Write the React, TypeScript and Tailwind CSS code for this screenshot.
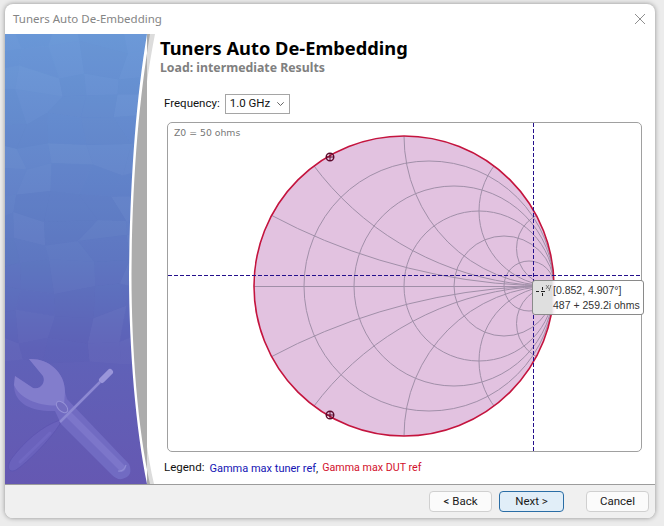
import React from 'react';

const uiFont = "font-['Noto_Sans',sans-serif]";

// low-poly facets for the sidebar art
const rnd = (n: number) => {
  const s = Math.sin(n * 127.1) * 43758.5453;
  return s - Math.floor(s);
};
const vertex = (i: number, j: number) => {
  const x = i * 34 - 15 + (rnd(i * 31 + j * 7 + 1) - 0.5) * 22;
  const y = 24 + j * 24 + (rnd(i * 13 + j * 53 + 2) - 0.5) * 16;
  return `${x.toFixed(1)},${y.toFixed(1)}`;
};
const facets: { points: string; fill: string; opacity: number }[] = [];
for (let j = 0; j < 14; j++) {
  for (let i = 0; i < 6; i++) {
    const r = rnd(i * 17 + j * 29 + 5);
    facets.push({
      points: [vertex(i, j), vertex(i + 1, j), vertex(i + 1, j + 1), vertex(i, j + 1)].join(' '),
      fill: r > 0.5 ? '#ffffff' : '#1c2a80',
      opacity: 0.006 + Math.abs(r - 0.5) * 0.04,
    });
  }
}

function SidebarArt() {
  const edge = 'C 136 100, 130 180, 129 275 C 129 350, 136 430, 147 484';
  return (
    <svg viewBox="5 34 150 450" className="h-[450px] w-[150px] shrink-0">
      <defs>
        <linearGradient id="sky" x1="0" y1="0" x2="0" y2="1">
          <stop offset="0" stopColor="#6b99d8" />
          <stop offset="0.25" stopColor="#6489cd" />
          <stop offset="0.5" stopColor="#5f78c2" />
          <stop offset="0.7" stopColor="#5f62b8" />
          <stop offset="1" stopColor="#6558b2" />
        </linearGradient>
        <clipPath id="sideClip">
          <path d={`M5 34 L147 34 ${edge} L5 484 Z`} />
        </clipPath>
      </defs>
      <path d="M147 34 L155 34 C 142 100, 135 180, 135 275 C 135 350, 142 430, 154 484 L147 484 Z" fill="#dcdcdc" />
      <path d="M147 34 L150 34 C 139 100, 132 180, 131.5 275 C 131.5 350, 138 430, 150 484 L147 484 Z" fill="#acacac" />
      <g clipPath="url(#sideClip)" fill="none">
        <rect x="5" y="34" width="150" height="450" fill="url(#sky)" />
        {facets.map((f, k) => (
          <polygon key={k} points={f.points} fill={f.fill} fillOpacity={f.opacity} />
        ))}
        {/* screwdriver handle behind */}
        <path d="M60 424 C 50 440, 28 462, 16 470 C 8 474, 6 466, 12 458 C 24 442, 42 426, 60 420 Z" fill="#6a62bc" stroke="#5f57b2" strokeWidth="1" />
        <path d="M50 433 L20 462" stroke="#7068c2" strokeWidth="3" strokeLinecap="round" />
        {/* wrench */}
        <path
          d="M29 359 C 47 358, 65 371, 65 392 L 67 399 L 129 464 Q 134 476 122 479 Q 117 480 112 475 L 61 424 L 55 411 C 36 412, 14 406, 14 385 L 15 376 L 33 388 C 41 390, 46 382, 43 376 Z"
          fill="#716bc2"
        />
        <path d="M29 359 C 47 358, 65 371, 65 392 L 64 405 C 44 408, 20 400, 14 385 L 15 376 L 33 388 C 41 390, 46 382, 43 376 Z" fill="#827dcc" />
        <path d="M70 416 L 122 468" stroke="#7c76ca" strokeWidth="7" strokeLinecap="round" />
        <path d="M118 471 Q 124 472 126 465" stroke="#8e8ad4" strokeWidth="1.2" />
        <ellipse cx="62" cy="407" rx="4" ry="7" transform="rotate(-45 62 407)" fill="#736dc0" stroke="#9591d6" strokeWidth="1" />
        {/* shaft */}
        <path d="M60 422 L 100 382" stroke="#8d89d2" strokeWidth="2.5" />
        <path d="M102 380 L 110 372" stroke="#9a96da" strokeWidth="6" strokeLinecap="round" />
      </g>
    </svg>
  );
}

const rs = [0.2, 0.5, 1, 2, 5];
const xs = [0.25, 0.5, 1, 2, 4];
const cx = 404;
const cy = 286;
const R = 150;

function Marker({ x, y }: { x: number; y: number }) {
  return (
    <g stroke="#5c0a2c" fill="none">
      <circle cx={x} cy={y} r="3.8" strokeWidth="1.4" />
      <path d={`M${x - 4} ${y} H${x + 4} M${x} ${y - 4} V${y + 4}`} strokeWidth="1" />
    </g>
  );
}

function SmithChart() {
  return (
    <svg viewBox="168 123 473 328" className="h-full w-full">
      <defs>
        <clipPath id="unit">
          <circle cx={cx} cy={cy} r={R} />
        </clipPath>
      </defs>
      <circle cx={cx} cy={cy} r={R} fill="#e2c2e0" />
      <g clipPath="url(#unit)" fill="none" stroke="#a08fa8" strokeWidth="1">
        {rs.map((r) => (
          <circle key={r} cx={cx + (R * r) / (r + 1)} cy={cy} r={R / (r + 1)} />
        ))}
        {xs.map((x) => (
          <React.Fragment key={x}>
            <circle cx={cx + R} cy={cy - R / x} r={R / x} />
            <circle cx={cx + R} cy={cy + R / x} r={R / x} />
          </React.Fragment>
        ))}
        <path d={`M${cx - R} ${cy + 0.5} H${cx + R}`} />
      </g>
      <circle cx={cx} cy={cy} r={R} fill="none" stroke="#c4143e" strokeWidth="1.6" />
      <path d="M168 275.5 H642 M533.5 123 V451" stroke="#24108c" strokeWidth="1" strokeDasharray="4 2" />
      <Marker x={330} y={157} />
      <Marker x={330} y={415} />
    </svg>
  );
}

function WizardButton({ label, className }: { label: string; className: string }) {
  return (
    <button className={`h-[21px] rounded-[4px] border text-[11.5px] leading-none text-[#1a1a1a] ${className}`}>
      {label}
    </button>
  );
}

export default function App() {
  return (
    <div className={`h-[526px] w-[664px] overflow-hidden bg-[#ececec] pl-[5px] pt-[4px] ${uiFont}`}>
      <div className="flex h-[514px] w-[650px] flex-col overflow-hidden rounded-lg bg-white shadow-[0_0_5px_rgba(0,0,0,0.4)]">
        {/* title bar */}
        <div className="flex h-[30px] shrink-0 items-center justify-between pl-[8px] pr-[10px]">
          <span className="text-[11.5px] text-[#858585]">Tuners Auto De-Embedding</span>
          <svg width="10" height="10" viewBox="0 0 10 10" stroke="#8f8f8f" strokeWidth="1">
            <path d="M0 0 L10 10 M10 0 L0 10" />
          </svg>
        </div>

        <div className="flex h-[450px] shrink-0">
          <SidebarArt />
          <div className="flex min-w-0 flex-1 flex-col pl-[5px]">
            <h1 className="mt-[2px] text-[18.3px] leading-[24px] font-bold text-black">Tuners Auto De-Embedding</h1>
            <p className="text-[12.3px] leading-[16px] font-bold text-[#808080]">Load: intermediate Results</p>

            <div className="mt-[18px] ml-[4px] flex h-[20px] items-center gap-[5px] font-['Roboto',sans-serif] text-[11.5px] leading-none text-[#111]">
              <span>Frequency:</span>
              <div className="flex h-[20px] w-[65px] items-center justify-between border border-[#a5a5a5] pr-[5px] pl-[4px]">
                <span>1.0 GHz</span>
                <svg width="7" height="4" viewBox="0 0 7 4" fill="none" stroke="#555" strokeWidth="0.9">
                  <path d="M0.3 0.3 L3.5 3.5 L6.7 0.3" />
                </svg>
              </div>
            </div>

            <div className="relative mt-[8px] ml-[7px] h-[330px] w-[475px] rounded-[5px] border border-[#a0a0a0]">
              <SmithChart />
              <span className="absolute top-[3px] left-[6px] font-['DejaVu_Sans',sans-serif] text-[9.3px] text-[#777]">
                Z0 = 50 ohms
              </span>
              {/* readout under the cursor */}
              <div className="absolute top-[157px] left-[364px] h-[35px] w-[112px] rounded-[3px] border border-[#8a8a8a] bg-[linear-gradient(to_right,#dfdfdf_17%,#fbf3f8_19%,#ffffff_21%)] pl-[20px] font-['Liberation_Sans',sans-serif] text-[10.5px] leading-[15px] text-[#333]">
                <div className="pt-[2px]">[0.852, 4.907°]</div>
                <div>487 + 259.2i ohms</div>
                <svg className="absolute top-[3px] left-[3px]" width="16" height="12" viewBox="0 0 16 12" fill="none" stroke="#222" strokeWidth="1">
                  <path d="M0 7.5 H3 M5 7.5 H9 M6.5 3 V6 M6.5 9 V12" />
                  <path d="M10 1 L13 5 M13 1 L10 5 M15 1 L13 7" stroke="#555" strokeWidth="0.7" />
                </svg>
              </div>
            </div>

            <div className="mt-[8px] ml-[4px] flex h-[16px] items-center gap-[4px] font-['Roboto',sans-serif] text-[11px] leading-none">
              <span className="mr-[1px] text-[11.5px] text-[#111]">Legend:</span>
              <span>
                <span className="text-[#1414b4]">Gamma max tuner ref</span>
                <span className="text-[#111]">,</span>
              </span>
              <span className="text-[10.7px] text-[#d2102c]">Gamma max DUT ref</span>
            </div>
          </div>
        </div>

        {/* footer */}
        <div className="flex h-[34px] shrink-0 items-start border-t border-[#9c9c9c] bg-[#f0f0f0] pt-[6px] pl-[424px] font-['Roboto',sans-serif]">
          <WizardButton label="< Back" className="w-[63px] border-[#d0d0d0] bg-[#fbfbfb]" />
          <WizardButton label="Next >" className="ml-[7px] w-[65px] border-[#2a6da5] bg-[#e1eef8]" />
          <WizardButton label="Cancel" className="ml-[22px] w-[63px] border-[#d0d0d0] bg-[#fbfbfb]" />
        </div>
      </div>
    </div>
  );
}
